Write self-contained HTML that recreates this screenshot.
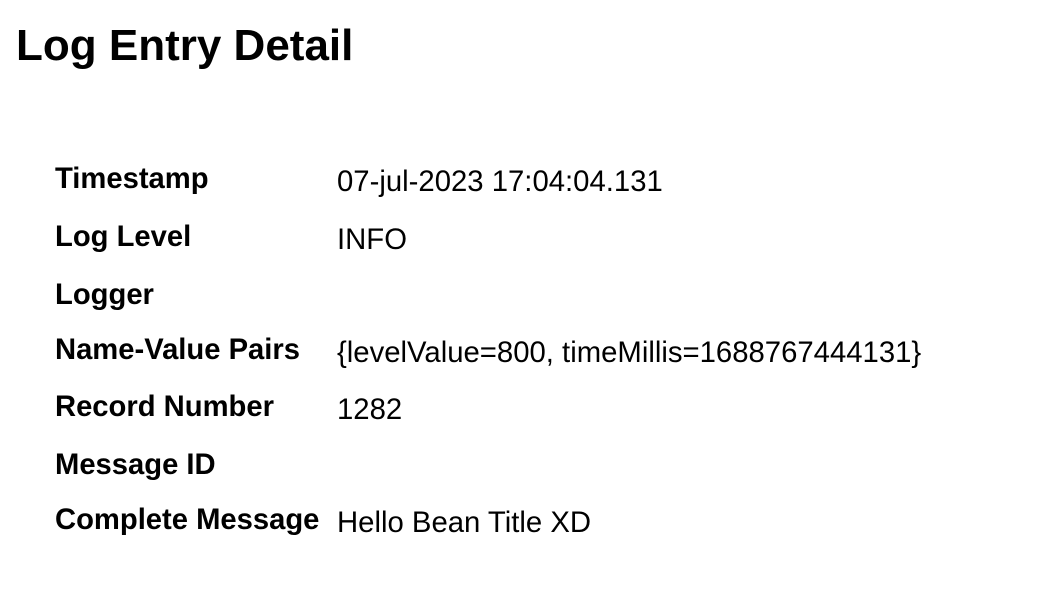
<!DOCTYPE html>
<html><head><style>
body{margin:0;background:#fff;font-family:"Liberation Sans",Arial,sans-serif;color:#000;}
h1{position:absolute;left:16px;top:21px;margin:0;font-size:44px;font-weight:bold;line-height:normal;white-space:nowrap;}
.r{position:absolute;left:55px;}
.l{position:absolute;left:0;top:0;font-weight:bold;font-size:29.2px;line-height:normal;white-space:nowrap;}
.v{position:absolute;left:282px;top:2px;font-size:29.3px;line-height:normal;white-space:nowrap;}
</style></head><body>
<h1>Log Entry Detail</h1>
<div class="r" style="top:163px"><span class="l">Timestamp</span><span class="v">07-jul-2023 17:04:04.131</span></div>
<div class="r" style="top:221px"><span class="l">Log Level</span><span class="v">INFO</span></div>
<div class="r" style="top:279px"><span class="l">Logger</span></div>
<div class="r" style="top:334px"><span class="l">Name-Value Pairs</span><span class="v">{levelValue=800, timeMillis=1688767444131}</span></div>
<div class="r" style="top:391px"><span class="l">Record Number</span><span class="v">1282</span></div>
<div class="r" style="top:449px"><span class="l">Message ID</span></div>
<div class="r" style="top:504px"><span class="l">Complete Message</span><span class="v">Hello Bean Title XD</span></div>
</body></html>
